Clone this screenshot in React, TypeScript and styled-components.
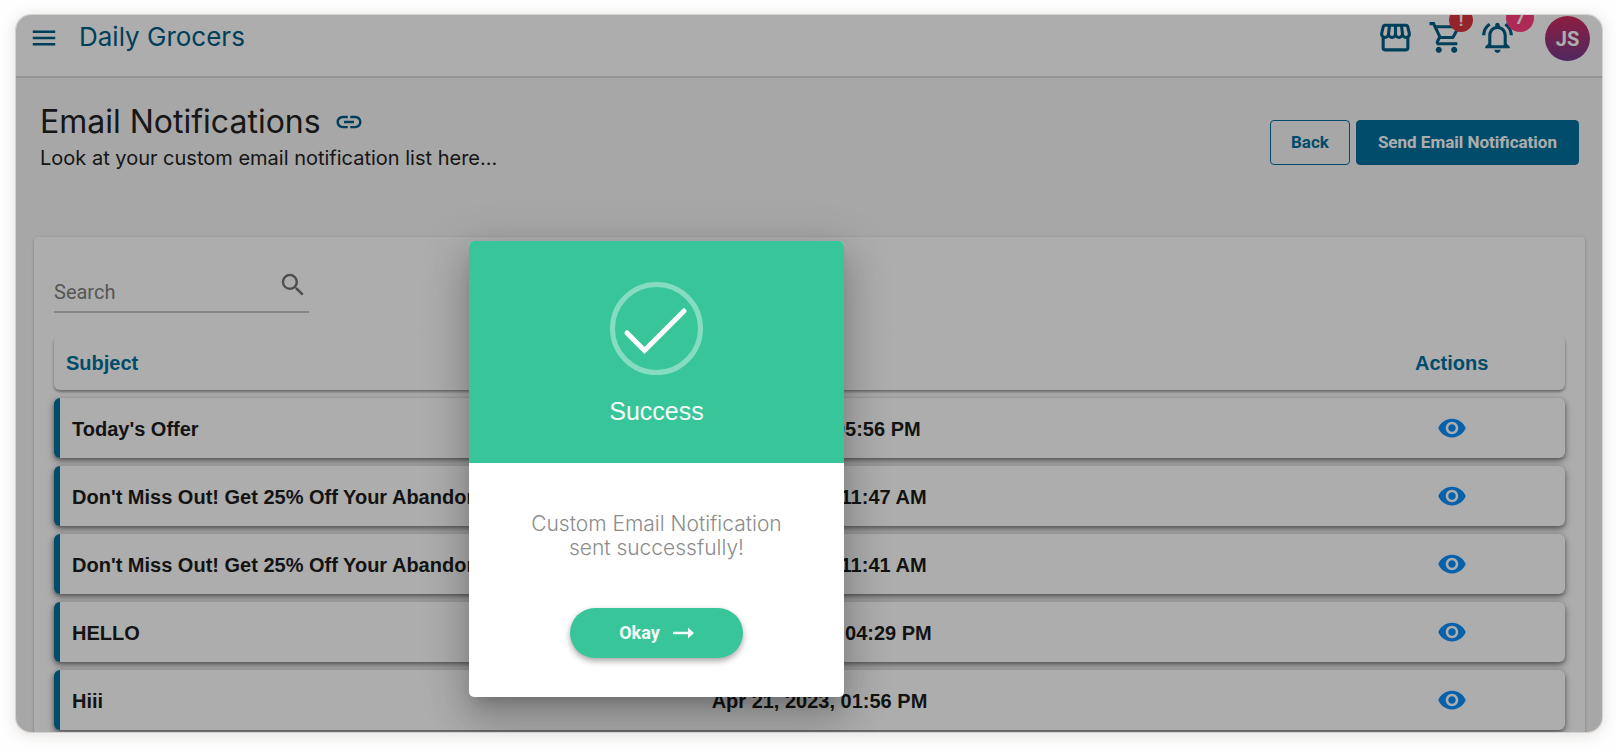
import React from "react";
import styled, { createGlobalStyle } from "styled-components";
import {
  MdMenu,
  MdOutlineStorefront,
  MdOutlineShoppingCart,
  MdOutlineNotificationsActive,
  MdLink,
  MdSearch,
  MdVisibility,
} from "react-icons/md";

const brand = "#00719d";
const brandDark = "#005d85";
const green = "#38c59a";
const display = `Inter, "Noto Sans", sans-serif`;
const body = `Roboto, "Liberation Sans", sans-serif`;
const table = `"Liberation Sans", Arial, sans-serif`;

const GlobalStyle = createGlobalStyle`
  * { box-sizing: border-box; }
  body { margin: 0; background: #fefefe; font-family: ${body}; }
  h1, h2, p { margin: 0; font-weight: 400; }
  button { cursor: pointer; }
`;

const Page = styled.div`
  height: 100vh;
  padding: 15px 16px 17px;
`;

const Frame = styled.div`
  position: relative;
  height: 100%;
  overflow: hidden;
  border-radius: 15px;
  background: #f7f7f7;
  box-shadow: 0 0 0 1px #d4d2d0, 0 2px 14px 2px rgba(90, 70, 60, 0.14);
`;

const TopBar = styled.header`
  display: flex;
  align-items: center;
  height: 63px;
  padding: 0 12px 16px 13px;
  background: #fff;
  border-bottom: 2px solid #dadada;
  color: ${brandDark};
`;

const IconButton = styled.button`
  position: relative;
  display: flex;
  padding: 0;
  border: 0;
  background: none;
  color: inherit;
`;

const Brand = styled.span`
  flex: 1;
  margin-left: 20px;
  padding-bottom: 2px;
  font: 400 26px/32px ${display};
`;

const TopActions = styled.div`
  display: flex;
  align-items: center;
  gap: 14px;
`;

const Badge = styled.span<{ $size: number; $color: string; $right: number }>`
  position: absolute;
  right: ${(p) => p.$right}px;
  bottom: 24px;
  width: ${(p) => p.$size}px;
  height: ${(p) => p.$size}px;
  border-radius: 50%;
  background: ${(p) => p.$color};
  color: #fff;
  font: 700 17px/${(p) => p.$size}px ${body};
  text-align: center;
`;

const Avatar = styled.button`
  width: 45px;
  height: 45px;
  margin: 2px 0 0 15px;
  padding: 0;
  border: 0;
  border-radius: 50%;
  background: linear-gradient(#d12c5e, #753b8f);
  color: #fff;
  font: 700 20px/42px ${body};
`;

const TitleBar = styled.section`
  display: flex;
  justify-content: space-between;
  align-items: flex-start;
  padding: 26px 23px 63px 24px;
`;

const TitleRow = styled.div`
  display: flex;
  align-items: center;
  gap: 13px;
  color: ${brandDark};
`;

const Title = styled.h1`
  color: #222;
  font: 400 32px/36px ${display};
`;

const Subtitle = styled.p`
  padding-top: 2px;
  color: #222;
  font: 400 20px/32px ${display};
`;

const TitleActions = styled.div`
  display: flex;
  gap: 6px;
  padding-top: 16px;
`;

const ActionButton = styled.button<{ $filled?: boolean }>`
  height: 45px;
  padding: 0 ${(p) => (p.$filled ? 21 : 20)}px;
  border: 1px solid ${brand};
  border-radius: 4px;
  background: ${(p) => (p.$filled ? brand : "transparent")};
  color: ${(p) => (p.$filled ? "#fff" : brand)};
  font: 700 17px/43px ${body};
`;

const Card = styled.main`
  margin: 0 17px 0 18px;
  padding: 30px 20px;
  border-radius: 4px;
  background: #fff;
  box-shadow: 0 1px 3px rgba(0, 0, 0, 0.3);
`;

const SearchField = styled.label`
  display: flex;
  width: 255px;
  height: 46px;
  padding: 3px 1px 0 0;
  border-bottom: 2px solid #c6c6c6;
  color: #757575;
`;

const SearchInput = styled.input`
  flex: 1;
  min-width: 0;
  padding: 2px 0 0;
  border: 0;
  outline: 0;
  background: none;
  color: inherit;
  font: 400 20px/24px ${body};
  &::placeholder { color: #808080; opacity: 1; }
`;

const Table = styled.table`
  display: flex;
  flex-direction: column;
  gap: 8px;
  margin-top: 23px;
  font: 700 20px/24px ${table};
`;

const Head = styled.thead`
  display: block;
`;

const Body = styled.tbody`
  display: flex;
  flex-direction: column;
  gap: 8px;
`;

const Row = styled.tr<{ $head?: boolean }>`
  display: grid;
  grid-template-columns: 17fr 17fr 6fr;
  align-items: center;
  height: ${(p) => (p.$head ? 54 : 60)}px;
  border-left: ${(p) => (p.$head ? "0" : `6px solid ${brand}`)};
  border-radius: 6px;
  background: #fff;
  color: ${(p) => (p.$head ? brand : "#1c1c1c")};
  box-shadow: ${(p) =>
    p.$head
      ? "0 2px 3px rgba(0, 0, 0, 0.4)"
      : "0 2px 4px rgba(0, 0, 0, 0.35), 0 3px 8px rgba(0, 0, 0, 0.3)"};
`;

const HeadCell = styled.th<{ $center?: boolean }>`
  padding: 0 12px;
  text-align: ${(p) => (p.$center ? "center" : "left")};
`;

const Cell = styled.td`
  padding: 2px 12px 0;
  white-space: nowrap;
`;

const ActionCell = styled.td`
  display: flex;
  justify-content: center;
  padding: 0;
  color: #0891fb;
`;

const Overlay = styled.div`
  position: absolute;
  inset: 0;
  padding: 226px 0 0 28.56%;
  background: rgba(0, 0, 0, 0.32);
`;

const Dialog = styled.section`
  width: 375px;
  overflow: hidden;
  border-radius: 5px;
  background: #fff;
  text-align: center;
  box-shadow: 0 11px 15px -7px rgba(0, 0, 0, 0.2), 0 24px 38px 3px rgba(0, 0, 0, 0.14),
    0 9px 46px 8px rgba(0, 0, 0, 0.12);
`;

const DialogHead = styled.div`
  display: flex;
  flex-direction: column;
  align-items: center;
  gap: 20px;
  padding: 41px 0 36px;
  background: ${green};
`;

const DialogTitle = styled.h2`
  color: #f4fbf8;
  font: 400 25px/32px ${table};
`;

const DialogBody = styled.div`
  display: flex;
  flex-direction: column;
  align-items: center;
  gap: 48px;
  padding: 49px 50px 39px;
`;

const Message = styled.p`
  color: #8c8c8c;
  font: 300 21px/24px ${display};
`;

const OkayButton = styled.button`
  display: flex;
  align-items: center;
  justify-content: center;
  gap: 13px;
  width: 173px;
  height: 50px;
  border: 0;
  border-radius: 25px;
  background: ${green};
  color: #f4fbf8;
  font: 700 18px/24px ${body};
  box-shadow: 0 3px 6px rgba(0, 0, 0, 0.35);
`;

const rows = [
  { subject: "Today's Offer", date: "May 4, 2023, 05:56 PM" },
  { subject: "Don't Miss Out! Get 25% Off Your Abandoned Cart", date: "Apr 28, 2023, 11:47 AM" },
  { subject: "Don't Miss Out! Get 25% Off Your Abandoned Cart", date: "Apr 28, 2023, 11:41 AM" },
  { subject: "HELLO", date: "May 22, 2023, 04:29 PM" },
  { subject: "Hiii", date: "Apr 21, 2023, 01:56 PM" },
];

export default function App() {
  return (
    <>
      <GlobalStyle />
      <Page>
        <Frame>
          <TopBar>
            <IconButton aria-label="Menu">
              <MdMenu size={30} />
            </IconButton>
            <Brand>Daily Grocers</Brand>
            <TopActions>
              <IconButton aria-label="Store">
                <MdOutlineStorefront size={37} />
              </IconButton>
              <IconButton aria-label="Cart">
                <MdOutlineShoppingCart size={37} />
                <Badge $size={24} $color="#dc3440" $right={-8}>!</Badge>
              </IconButton>
              <IconButton aria-label="Alerts">
                <MdOutlineNotificationsActive size={37} />
                <Badge $size={28} $color="#ff3f81" $right={-18}>7</Badge>
              </IconButton>
              <Avatar>JS</Avatar>
            </TopActions>
          </TopBar>

          <TitleBar>
            <div>
              <TitleRow>
                <Title>Email Notifications</Title>
                <MdLink size={30} />
              </TitleRow>
              <Subtitle>Look at your custom email notification list here...</Subtitle>
            </div>
            <TitleActions>
              <ActionButton>Back</ActionButton>
              <ActionButton $filled>Send Email Notification</ActionButton>
            </TitleActions>
          </TitleBar>

          <Card>
            <SearchField>
              <SearchInput type="text" placeholder="Search" aria-label="Search" />
              <MdSearch size={30} />
            </SearchField>
            <Table>
              <Head>
                <Row $head>
                  <HeadCell>Subject</HeadCell>
                  <HeadCell>Date</HeadCell>
                  <HeadCell $center>Actions</HeadCell>
                </Row>
              </Head>
              <Body>
                {rows.map((row, i) => (
                  <Row key={i}>
                    <Cell>{row.subject}</Cell>
                    <Cell>{row.date}</Cell>
                    <ActionCell>
                      <IconButton aria-label="View">
                        <MdVisibility size={30} />
                      </IconButton>
                    </ActionCell>
                  </Row>
                ))}
              </Body>
            </Table>
          </Card>

          <Overlay>
            <Dialog role="dialog" aria-modal="true" aria-labelledby="dialog-title">
              <DialogHead>
                <svg width="93" height="93" viewBox="0 0 93 93" fill="none" aria-hidden="true">
                  <circle cx="46.500" cy="46.500" r="44" stroke="#86dcc0" strokeWidth="5" />
                  <path d="M17 51 34.500 68.500 74 29" stroke="#fff" strokeWidth="5" strokeLinecap="round" />
                </svg>
                <DialogTitle id="dialog-title">Success</DialogTitle>
              </DialogHead>
              <DialogBody>
                <Message>Custom Email Notification sent successfully!</Message>
                <OkayButton>
                  Okay
                  <svg width="21" height="12" viewBox="0 0 21 12" aria-hidden="true">
                    <path d="M0 4.700h15V.5L21 6l-6 5.500V7.300H0z" fill="currentColor" />
                  </svg>
                </OkayButton>
              </DialogBody>
            </Dialog>
          </Overlay>
        </Frame>
      </Page>
    </>
  );
}
